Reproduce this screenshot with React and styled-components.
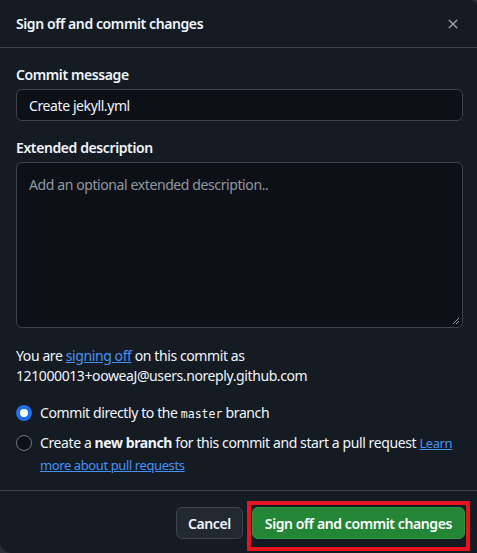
import React from "react";
import styled, { createGlobalStyle } from "styled-components";

const GlobalStyle = createGlobalStyle`
  html, body {
    margin: 0;
    padding: 0;
    background: #2a2f37;
    overflow: hidden;
  }
  body {
    font-family: "Noto Sans", "Open Sans", sans-serif;
    color: #f0f6fc;
    letter-spacing: -0.4px;
  }
`;

const Dialog = styled.div`
  width: 480px;
  height: 553px;
  background: #151b23;
  border-radius: 0 12px 0 12px;
  display: flex;
  flex-direction: column;
  box-sizing: border-box;
`;

const Header = styled.div`
  height: 48px;
  box-sizing: border-box;
  border-bottom: 1px solid #3d444d;
  display: flex;
  align-items: center;
  justify-content: space-between;
  padding: 0 19px 0 16px;
`;

const Title = styled.h1`
  margin: 0;
  font-size: 14px;
  font-weight: 600;
`;

const CloseButton = styled.button`
  background: none;
  border: none;
  padding: 0;
  color: #9198a1;
  display: flex;
  cursor: pointer;
`;

const Body = styled.div`
  flex: 1;
  padding: 17px 16px 0 16px;
  display: flex;
  flex-direction: column;
`;

const Label = styled.label`
  font-size: 14px;
  font-weight: 600;
  line-height: 20px;
  margin-bottom: 4px;
`;

const Input = styled.div`
  height: 32px;
  box-sizing: border-box;
  width: 447px;
  background: #0d1117;
  border: 1px solid #3d444d;
  border-radius: 6px;
  padding: 0 12px;
  display: flex;
  align-items: center;
  font-size: 14px;
  margin-bottom: 17px;
`;

const TextArea = styled.div`
  position: relative;
  height: 166px;
  box-sizing: border-box;
  width: 447px;
  background: #0d1117;
  border: 1px solid #3d444d;
  border-radius: 6px;
  padding: 12px 12px;
  font-size: 14px;
  line-height: 20px;
  color: #9198a1;
  margin-bottom: 18px;
`;

const Grip = styled.svg`
  position: absolute;
  right: 2px;
  bottom: 2px;
`;

const Note = styled.p`
  margin: 0 0 16px;
  font-size: 14px;
  line-height: 20px;
`;

const Link = styled.a`
  color: #4493f8;
  text-decoration: underline;
  font-size: ${(p) => (p.small ? "13px" : "inherit")};
`;

const Options = styled.div`
  display: flex;
  flex-direction: column;
  gap: 7px;
`;

const Option = styled.div`
  display: flex;
  align-items: flex-start;
  gap: 8px;
  font-size: 14px;
  line-height: 22px;
`;

const Radio = styled.span`
  flex: none;
  width: 16px;
  height: 16px;
  margin-top: 3px;
  box-sizing: border-box;
  border-radius: 50%;
  background: ${(p) => (p.checked ? "#ffffff" : "#0d1117")};
  border: ${(p) => (p.checked ? "4.5px solid #1f6feb" : "1px solid #6e7681")};
`;

const Code = styled.code`
  font-family: "DejaVu Sans Mono", "Liberation Mono", monospace;
  font-size: 11.5px;
  letter-spacing: 0;
`;

const Footer = styled.div`
  border-top: 1px solid #3d444d;
  height: 63px;
  box-sizing: border-box;
  display: flex;
  align-items: flex-start;
  justify-content: flex-end;
  gap: 4px;
  padding: 10px 10px 0 16px;
`;

const Button = styled.button`
  height: 32px;
  box-sizing: border-box;
  border-radius: 6px;
  padding: 0 ${(p) => (p.primary ? "12px" : "11px")};
  margin-top: ${(p) => (p.primary ? "0" : "6px")};
  font-family: "Noto Sans", "Open Sans", sans-serif;
  font-size: 14px;
  font-weight: 600;
  letter-spacing: -0.4px;
  cursor: pointer;
  background: ${(p) => (p.primary ? "#238636" : "#212830")};
  border: 1px solid ${(p) => (p.primary ? "#2d9a43" : "#3d444d")};
  color: ${(p) => (p.primary ? "#ffffff" : "#f0f6fc")};
`;

const Highlight = styled.div`
  border: 4px solid #e8131f;
  padding: 2px 1px 8px;
  display: flex;
`;

export default function App() {
  return (
    <>
      <GlobalStyle />
      <Dialog>
        <Header>
          <Title>Sign off and commit changes</Title>
          <CloseButton aria-label="Close">
            <svg width="16" height="16" viewBox="0 0 16 16" fill="currentColor">
              <path d="M3.72 3.72a.75.75 0 0 1 1.06 0L8 6.94l3.22-3.22a.749.749 0 0 1 1.275.326.749.749 0 0 1-.215.734L9.06 8l3.22 3.22a.749.749 0 0 1-.326 1.275.749.749 0 0 1-.734-.215L8 9.06l-3.220 3.22a.751.751 0 0 1-1.042-.018.751.751 0 0 1-.018-1.042L6.94 8 3.72 4.78a.75.75 0 0 1 0-1.060Z" />
            </svg>
          </CloseButton>
        </Header>
        <Body>
          <Label>Commit message</Label>
          <Input>Create jekyll.yml</Input>
          <Label>Extended description</Label>
          <TextArea>
            Add an optional extended description..
            <Grip width="8" height="8" viewBox="0 0 8 8">
              <path d="M7 1L1 7M7 4L4 7" stroke="#9198a1" strokeWidth="1" />
            </Grip>
          </TextArea>
          <Note>
            You are <Link href="#">signing off</Link> on this commit as
            <br />
            121000013+ooweaJ@users.noreply.github.com
          </Note>
          <Options>
            <Option>
              <Radio checked />
              <span>
                Commit directly to the <Code>master</Code> branch
              </span>
            </Option>
            <Option>
              <Radio />
              <span>
                Create a <b>new branch</b> for this commit and start a pull request{" "}
                <Link href="#" small>
                  Learn more about pull requests
                </Link>
              </span>
            </Option>
          </Options>
        </Body>
        <Footer>
          <Button>Cancel</Button>
          <Highlight>
            <Button primary>Sign off and commit changes</Button>
          </Highlight>
        </Footer>
      </Dialog>
    </>
  );
}
